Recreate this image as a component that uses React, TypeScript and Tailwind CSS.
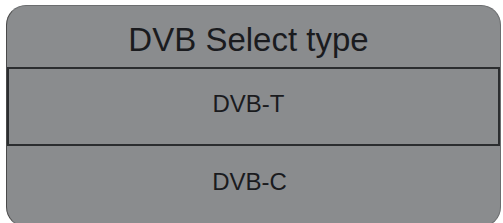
import React from "react";

const options = ["DVB-T", "DVB-C"];

const App = () => {
  return (
    <div className="w-[503px] h-[223px] overflow-hidden bg-white pt-[5px] pl-[6px] font-['Liberation_Sans',Arial,sans-serif]">
      <div className="w-[495px] h-[222px] rounded-[20px] border border-[#6b6d6f] border-l-[#4a4a4a] bg-[#8a8c8e] overflow-hidden flex flex-col text-[#1a1b1e]">
        <div className="h-[61px] flex items-center justify-center text-[33px] leading-none pt-[6px] pr-[10px]">
          DVB Select type
        </div>
        <div className="h-[79px] border-2 border-[#2b2d2f] flex items-center justify-center text-[24px] leading-none pb-[6px] pr-[10px]">
          {options[0]}
        </div>
        <div className="h-[80px] flex items-center justify-center text-[24px] leading-none pb-[8px] pr-[8px]">
          {options[1]}
        </div>
      </div>
    </div>
  );
};

export default App;
